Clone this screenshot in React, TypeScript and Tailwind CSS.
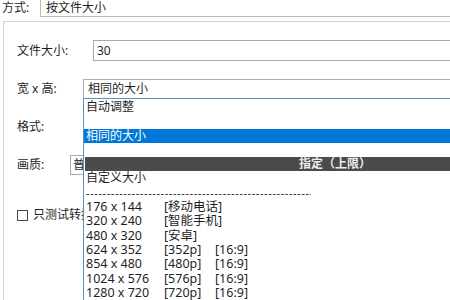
import React from 'react';

const sizes: [string, string, string][] = [
  ['176 x 144', '[移动电话]', ''],
  ['320 x 240', '[智能手机]', ''],
  ['480 x 320', '[安卓]', ''],
  ['624 x 352', '[352p]', '[16:9]'],
  ['854 x 480', '[480p]', '[16:9]'],
  ['1024 x 576', '[576p]', '[16:9]'],
  ['1280 x 720', '[720p]', '[16:9]'],
];

const App: React.FC = () => {
  return (
    <div className="relative w-[450px] h-[300px] overflow-hidden bg-white text-[12px] text-[#1f1f1f] font-['Noto_Sans','Noto_Sans_CJK_SC',sans-serif]">
      {/* 方式 row */}
      <div className="flex h-[17px]">
        <span className="w-[40px] pl-[2px] leading-[16px]">方式:</span>
        <div className="flex-1 border-l border-b border-[#bcbcbc] pl-[5px] leading-[16px]">按文件大小</div>
      </div>

      {/* Group box */}
      <div className="mt-[4px] ml-[3px] h-[280px] border-l border-t border-[#d3d3d3] pl-[13px]">
        <div className="mt-[18px] flex items-center h-[21px]">
          <span className="w-[76px]">文件大小:</span>
          <div className="flex-1 h-[21px] border border-r-0 border-[#a9a9a9] pl-[3px] leading-[19px]">30</div>
        </div>

        <div className="mt-[18px] flex items-center h-[20px]">
          <span className="w-[66px]">宽 x 高:</span>
          <div className="flex-1 h-[20px] border-t border-l border-[#9fb3c3] pl-[4px] leading-[18px]">相同的大小</div>
        </div>

        <div className="mt-[18px] flex items-center h-[20px]">
          <span>格式:</span>
        </div>

        <div className="mt-[18px] flex items-center h-[20px]">
          <span className="w-[53px]">画质:</span>
          <div className="w-[80px] h-[20px] border border-[#a9a9a9] pl-[2px] leading-[18px]">普通质量</div>
        </div>

        <div className="mt-[33px] flex items-center gap-[5px] h-[14px]">
          <span className="w-[11px] h-[11px] border border-[#444]" />
          <span>只测试转换</span>
        </div>
      </div>

      {/* Open dropdown list */}
      <div className="absolute left-[83px] top-[98px] w-[502px] h-[210px] border-t border-l border-[#5b8fc4] bg-white pt-[1px] text-[12.5px] leading-[14.3px]">
        <div className="h-[14.3px] pl-[2px] text-[12px]">自动调整</div>
        <div className="h-[14.3px]" />
        <div className="h-[14.3px] pl-[2px] bg-[#0078d7] text-white text-[12px]">相同的大小</div>
        <div className="h-[14.3px]" />
        <div className="h-[14.3px] ml-[1px] bg-[#4b4b4b] text-[#ececec] font-bold text-center text-[12px]">指定（上限）</div>
        <div className="h-[14.3px] pl-[2px] text-[12px]">自定义大小</div>
        <div className="h-[14.3px] pl-[2px] w-[227px] overflow-hidden whitespace-nowrap tracking-[0.6px] text-[11px]">
          {'-'.repeat(64)}
        </div>
        {sizes.map(([a, b, c]) => (
          <div key={a} className="h-[14.3px] pl-[2px] flex whitespace-nowrap">
            <span className="w-[78px]">{a}</span>
            <span className="w-[51px]">{b}</span>
            <span>{c}</span>
          </div>
        ))}
      </div>
    </div>
  );
};

export default App;
